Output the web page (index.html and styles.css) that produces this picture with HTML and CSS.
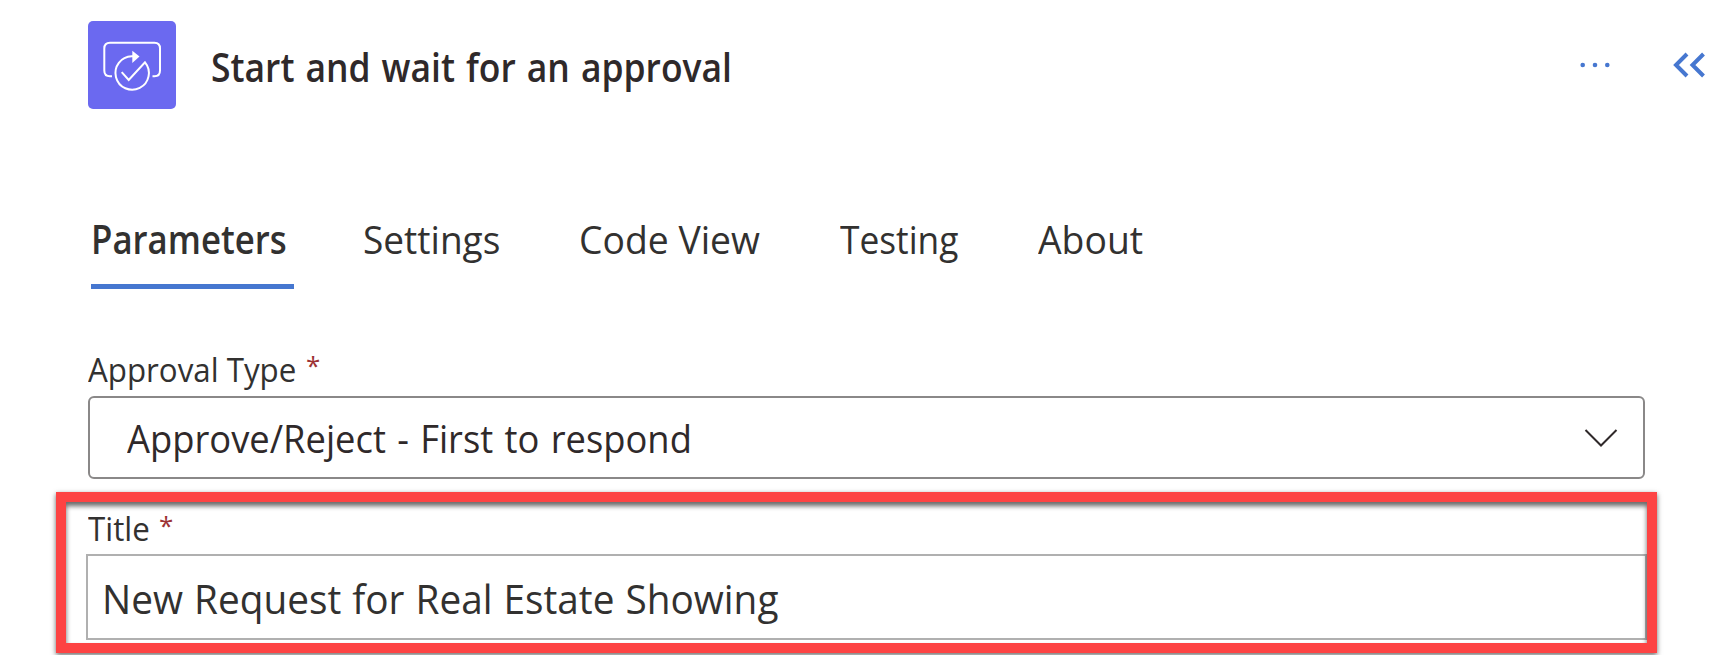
FILE: index.html
```html
<!DOCTYPE html>
<html lang="en">
<head>
<meta charset="utf-8">
<title>Start and wait for an approval</title>
<link rel="stylesheet" href="styles.css">
</head>
<body>
<main class="panel">
  <header class="header">
    <svg class="logo" viewBox="0 0 88 88" fill="none" stroke="#fff" stroke-width="2">
      <rect width="88" height="88" rx="5" fill="#6b69f0" stroke="none"/>
      <path d="M24 55.3H22Q16.300 55.300 16.300 49.500V27.500Q16.300 21.800 22 21.800H66.500Q72 21.800 72 27.500V49.500Q72 55.300 66.500 55.300H64.500"/>
      <path d="M46 35.300H43.700A16.700 16.700 0 1 0 57 41.300L40.700 59L33.700 51.200"/>
      <path d="M44.300 29.700L51.500 35.500L44.300 42Z" fill="#fff" stroke="none"/>
    </svg>
    <h1 class="heading"><span class="text heading-text">Start and wait for an approval</span></h1>
    <svg class="more" viewBox="0 0 32 8" fill="#4677d0"><circle cx="3.700" cy="4" r="2.300"/><circle cx="16" cy="4" r="2.300"/><circle cx="28.300" cy="4" r="2.300"/></svg>
    <svg class="collapse" viewBox="0 0 34 26" fill="none" stroke="#4677d0" stroke-width="4"><path d="M15 2L4 13L15 24M31.500 2L20.500 13L31.500 24"/></svg>
  </header>
  <nav class="tabs">
    <span class="tab tab-active"><span class="text parameters">Parameters</span></span>
    <span class="tab"><span class="text settings">Settings</span></span>
    <span class="tab"><span class="text code">Code View</span></span>
    <span class="tab"><span class="text testing">Testing</span></span>
    <span class="tab"><span class="text about">About</span></span>
  </nav>
  <section class="field">
    <div class="label label-type"><span class="text">Approval Type</span><span class="required">*</span></div>
    <div class="select">
      <span class="text select-value">Approve/Reject - First to respond</span>
      <svg class="chevron" viewBox="0 0 34 20" fill="none" stroke="#2f292a" stroke-width="2"><path d="M1.500 2L17 17.500L32.500 2"/></svg>
    </div>
  </section>
  <section class="highlight">
    <div class="label label-title"><span class="text">Title</span><span class="required">*</span></div>
    <div class="input"><span class="text input-value">New Request for Real Estate Showing</span></div>
  </section>
</main>
</body>
</html>
```
FILE: styles.css
```css
* { box-sizing: border-box; }
body { margin: 0; background: #fff; font-family: "Open Sans", "Noto Sans", sans-serif; color: #323130; overflow: hidden; }
.panel { height: 655px; padding-top: 21px; overflow: hidden; white-space: nowrap; }
.text { display: inline-block; transform-origin: left center; }
.header { display: flex; height: 88px; padding-left: 88px; }
.logo { width: 88px; height: 88px; flex: none; }
.heading { flex: none; margin: 0 0 0 35px; width: 1368px; font-size: 39px; line-height: 91px; font-weight: 600; color: #2f292a; }
.heading-text { word-spacing: 2px; transform: scaleX(.909); }
.more { width: 32px; height: 8px; margin-top: 39.500px; flex: none; }
.collapse { width: 34px; height: 26px; margin: 30.500px 0 0 61px; flex: none; }
.tabs { display: grid; grid-template-columns: 272px 216px 261px 198px 120px; height: 100px; margin: 80px 0 0 91px; font-size: 39px; line-height: 100px; }
.tab-active { width: 203px; height: 100px; font-weight: 600; border-bottom: 5px solid #4677d0; }
.parameters { transform: scaleX(.892); }
.settings { transform: scaleX(.95); }
.code { transform: scaleX(.957); }
.testing { transform: scaleX(.905); }
.about { transform: scaleX(.957); }
.field { margin: 60px 0 0 88px; width: 1557px; }
.label { display: grid; height: 47px; font-size: 33px; line-height: 41px; }
.label .text { transform: scaleX(.948); }
.label-type { grid-template-columns: 218px auto; }
.label-title { grid-template-columns: 71px auto; }
.required { margin-top: -4px; color: #9c3234; font-size: 26px; }
.select { display: flex; align-items: center; justify-content: space-between; height: 83px; border: 2px solid #8a8888; border-radius: 6px; padding: 0 25px 0 37px; font-size: 39px; line-height: 80px; color: #2f292a; }
.select-value { word-spacing: 2px; transform: scaleX(.932); }
.chevron { width: 34px; height: 20px; }
.highlight { position: relative; width: 1601px; height: 161px; margin: 13px 0 0 56px; padding: 10px 0 0 32px; }
.highlight::after { content: ""; position: absolute; inset: 0; border: 10px solid #fd4343; box-shadow: 0 2px 5px rgba(0,0,0,.6), inset 0 4px 5px rgba(0,0,0,.6); }
.highlight .label { height: 52px; line-height: 54px; }
.input { width: 1561px; height: 86px; margin-left: -2px; border: 2px solid #b0b0b0; padding-left: 14px; font-size: 40.500px; line-height: 86px; }
.input-value { word-spacing: 1px; transform: scaleX(.957); }
```
